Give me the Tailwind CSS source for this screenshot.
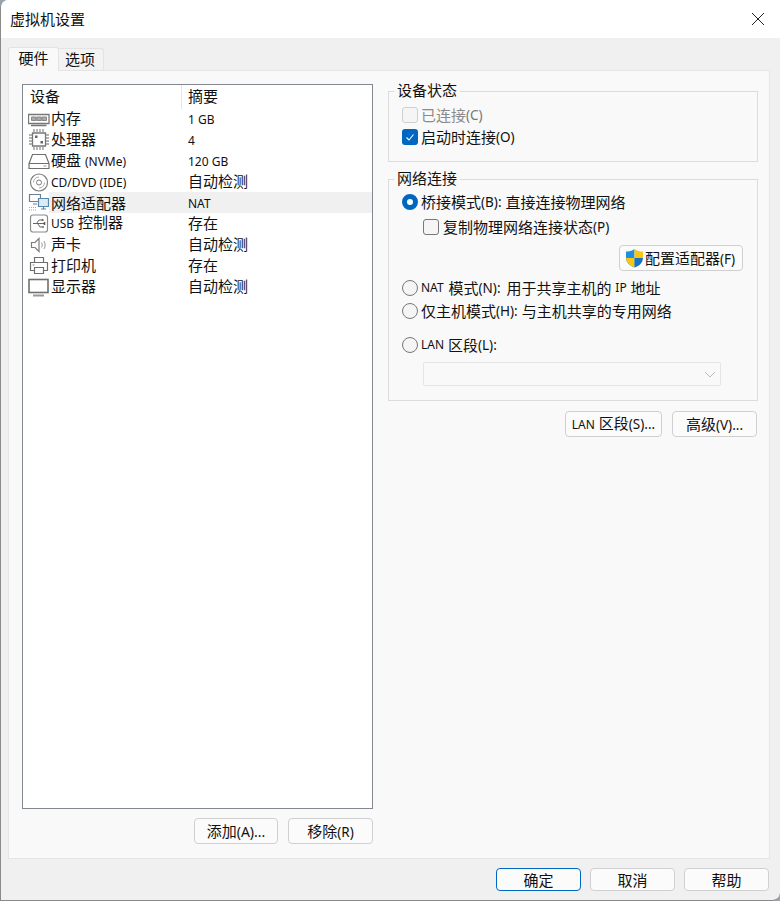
<!DOCTYPE html>
<html lang="zh-CN">
<head>
<meta charset="utf-8">
<title>虚拟机设置</title>
<script src="https://cdn.jsdelivr.net/npm/@tailwindcss/browser@4"></script>
</head>
<body class="w-[780px] h-[901px] overflow-hidden bg-[#9aa3ad] text-[15px] leading-[20px] text-[#111] font-['Noto_Sans','Noto_Sans_CJK_SC',sans-serif]">
<div class="w-[780px] h-[901px] flex flex-col overflow-hidden rounded-tl-lg rounded-br-lg border-b border-l border-[#8a8a8a] bg-[#f0f0f0]">
  <header class="h-[38px] shrink-0 bg-white flex items-center justify-between pl-[9px] pr-[15px]">
    <span>虚拟机设置</span>
    <svg class="w-[14px] h-[14px]" viewBox="0 0 14 14" fill="none" stroke="#222" stroke-width="1"><path d="M1 1l12 12M13 1L1 13"/></svg>
  </header>
  <div class="flex items-end h-[32px] pl-[7px] shrink-0">
    <div class="relative z-10 h-[24px] w-[51px] -mb-px bg-[#f9f9f9] border border-b-0 border-[#e3e3e3] rounded-t-[3px] text-center leading-[20px]">硬件</div>
    <div class="h-[22px] w-[45px] pr-[2px] border border-l-0 border-b-0 border-[#e3e3e3] bg-[#f3f3f3] rounded-tr-[3px] text-center leading-[20px]">选项</div>
  </div>
  <main class="ml-[7px] w-[762px] h-[789px] shrink-0 bg-[#f9f9f9] border border-[#e5e5e5] flex pl-[13px] pt-[13px]">
    <section class="w-[351px] shrink-0">
      <div class="h-[725px] bg-white border border-[#828790]">
        <div class="flex h-[24px] items-center">
          <div class="w-[159px] h-[24px] border-r border-[#e5e5e5] pl-[7px] leading-[23px]">设备</div>
          <div class="pl-[6px] leading-[23px] h-[24px]">摘要</div>
        </div>
        <ul class="-mt-px">
          <li class="flex h-[21px] items-center">
            <svg class="w-[22px] h-[16px] ml-[5px] mt-[2px] shrink-0" viewBox="0 0 22 16" fill="none" stroke="#777"><path d="M.5 2.500h20.500v9H.5zM3 13.500h15.500" stroke-width="1.300"/><path d="M3.500 5h4.500v3.500h-4.500zM8.800 5h4.500v3.500h-4.500zM14 5h4.500v3.500h-4.500z" fill="#aaa" stroke="#888"/></svg>
            <span class="w-[138px] pl-[1px] pb-[2px] shrink-0">内存</span><span class="text-[12px] pt-[2px]">1 GB</span>
          </li>
          <li class="flex h-[21px] items-center">
            <svg class="w-[22px] h-[21px] ml-[5px] shrink-0" viewBox="0 0 22 21" fill="none" stroke="#777"><path d="M4.500 4h13v13h-13z" stroke-width="1.300"/><path d="M6 0v3M9 0v3M12 0v3M15 0v3M6 18v3M9 18v3M12 18v3M15 18v3M1 6h3M1 9h3M1 12h3M1 15h3M18 6h3M18 9h3M18 12h3M18 15h3" stroke="#999" stroke-width="1.400"/><rect x="7" y="6.500" width="2.500" height="2.500" fill="#666" stroke="none"/><rect x="12.500" y="12" width="2.500" height="2.500" fill="#666" stroke="none"/></svg>
            <span class="w-[138px] pl-[1px] pb-[2px] shrink-0">处理器</span><span class="text-[12px] pt-[2px]">4</span>
          </li>
          <li class="flex h-[21px] items-center">
            <svg class="w-[22px] h-[17px] ml-[5px] mt-[2px] shrink-0" viewBox="0 0 22 17" fill="none" stroke="#6f6f6f" stroke-width="1.200"><path d="M4.500 1.500h13l3.500 9v5H1v-5zM1 10.500h20"/><path d="M15.500 13h3" stroke="#999"/></svg>
            <span class="w-[138px] pl-[1px] shrink-0">硬盘 <span class="text-[12px]">(NVMe)</span></span><span class="text-[12px] pt-[2px]">120 GB</span>
          </li>
          <li class="flex h-[21px] items-center">
            <svg class="w-[20px] h-[19px] ml-[6px] mr-[1px] mt-[2px] shrink-0" viewBox="0 0 20 19" fill="none" stroke="#7d7d7d"><circle cx="10" cy="9.500" r="8.500" stroke-width="1.200"/><circle cx="10" cy="9.500" r="2.500"/><path d="M4.500 9.500a5.500 5.500 0 0 1 5.500-5.500" stroke="#aaa"/><path d="M15.500 9.500a5.500 5.500 0 0 1-5.500 5.500" stroke="#aaa"/></svg>
            <span class="w-[138px] pl-[1px] pt-[2px] shrink-0 text-[12px]">CD/DVD (IDE)</span><span class="pb-[2px]">自动检测</span>
          </li>
          <li class="flex h-[21px] items-center">
            <svg class="w-[22px] h-[20px] ml-[5px] shrink-0" viewBox="0 0 22 20" fill="none" stroke="#5b88a8" stroke-width="1.200"><path d="M1.500 1.500h11v7h-11zM5 11h4" stroke="#6f7e8a"/><path d="M10.500 5.500h10v8h-10z" fill="#dbeaf5"/><path d="M15.500 13.500v2M13 16h5" stroke="#5b88a8"/><path d="M1 14.500h7M1 17h7" stroke="#aaa" stroke-dasharray="1 1"/></svg>
            <span class="flex-1 h-[21px] bg-[#f0f0f0] flex items-center ml-[-1px] pl-[1px]">
              <span class="w-[138px] pl-[1px] shrink-0">网络适配器</span><span class="text-[12px] pt-[2px]">NAT</span>
            </span>
          </li>
          <li class="flex h-[21px] items-center">
            <svg class="w-[20px] h-[19px] ml-[6px] mr-[1px] shrink-0" viewBox="0 0 20 19" fill="none" stroke="#8a8a8a"><rect x="1.500" y="1" width="17" height="17" rx="2.500" stroke-width="1.200"/><path d="M4 9.500h11.500M7.500 9.500l2.500-3.500h2.500M8.500 9.500l2.500 3.500h2" stroke="#666"/><path d="M15.500 8v3" stroke="#555" stroke-width="1.500"/><rect x="12.500" y="5" width="2" height="2" fill="#666" stroke="none"/><circle cx="14" cy="13" r="1" fill="#666" stroke="none"/></svg>
            <span class="w-[138px] pl-[1px] pb-[2px] shrink-0"><span class="text-[12px]">USB</span> 控制器</span><span class="pb-[2px]">存在</span>
          </li>
          <li class="flex h-[21px] items-center">
            <svg class="w-[20px] h-[18px] ml-[6px] mr-[1px] shrink-0" viewBox="0 0 20 18" fill="none" stroke="#7d7d7d"><path d="M2.500 6.500h3.500l4-4v13l-4-4h-3.500z" stroke-width="1.200"/><path d="M12.500 6.500c1 1.500 1 3.500 0 5M15 5c1.500 2.500 1.500 5.500 0 8" stroke="#999"/></svg>
            <span class="w-[138px] pl-[1px] pb-[2px] shrink-0">声卡</span><span class="pb-[2px]">自动检测</span>
          </li>
          <li class="flex h-[21px] items-center">
            <svg class="w-[20px] h-[19px] ml-[6px] mr-[1px] shrink-0" viewBox="0 0 20 19" fill="none" stroke="#6f6f6f" stroke-width="1.200"><path d="M5.500 6.500v-5h9v5M5 14.500H1.500v-8h17v8H15"/><path d="M5.500 11.500h9v6h-9z"/><path d="M3.500 9h2" stroke="#999"/></svg>
            <span class="w-[138px] pl-[1px] pb-[2px] shrink-0">打印机</span><span class="pb-[2px]">存在</span>
          </li>
          <li class="flex h-[21px] items-center">
            <svg class="w-[21px] h-[19px] ml-[5px] mr-[1px] mt-[2px] shrink-0" viewBox="0 0 21 19" fill="none" stroke="#6f6f6f"><rect x="1" y="1.500" width="19" height="13" stroke-width="1.600"/><path d="M5 17.500h11" stroke-width="2" stroke="#999"/></svg>
            <span class="w-[138px] pl-[1px] pb-[2px] shrink-0">显示器</span><span class="pb-[2px]">自动检测</span>
          </li>
        </ul>
      </div>
      <div class="flex justify-end gap-[10px] mt-[9px]">
        <button class="w-[84px] h-[26px] bg-[#fbfbfb] border border-[#d0d0d0] rounded-[4px]">添加<span class="text-[14px]">(A)...</span></button>
        <button class="w-[85px] h-[26px] bg-[#fbfbfb] border border-[#d0d0d0] rounded-[4px]">移除<span class="text-[13.500px]">(R)</span></button>
      </div>
    </section>
    <section class="w-[370px] ml-[15px] shrink-0">
      <fieldset class="mt-[7px] h-[71px] border border-[#dcdcdc] relative">
        <span class="absolute left-[5px] top-[-12px] px-[3px] bg-[#f9f9f9]">设备状态</span>
        <div class="flex items-center h-[24px] mt-[11px] pl-[13px] text-[#8a8a8a]">
          <span class="w-[16px] h-[16px] rounded-[3px] border border-[#cfcfcf] bg-[#f5f5f5] mr-[3px]"></span>已连接<span class="text-[13.500px] text-[#777]">(C)</span>
        </div>
        <div class="flex items-center h-[20px] pl-[13px]">
          <span class="w-[16px] h-[16px] rounded-[3px] bg-[#0067c0] mr-[3px] flex items-center justify-center">
            <svg class="w-[12px] h-[12px]" viewBox="0 0 12 12" fill="none" stroke="#fff" stroke-width="1.100"><path d="M2.500 6.500l2.500 2.500 4.500-5.500"/></svg>
          </span>启动时连接<span class="text-[13.500px]">(O)</span>
        </div>
      </fieldset>
      <fieldset class="mt-[17px] h-[222px] border border-[#dcdcdc] relative">
        <span class="absolute left-[5px] top-[-12px] px-[3px] bg-[#f9f9f9]">网络连接</span>
        <div class="flex items-center h-[24px] mt-[10px] pl-[13px]">
          <span class="w-[16px] h-[16px] rounded-full border-[5px] border-[#0067c0] bg-white mr-[3px]"></span>桥接模式<span class="text-[13.500px]">(B):</span>&nbsp;直接连接物理网络
        </div>
        <div class="flex items-center h-[24px] mt-[1px] pl-[34px]">
          <span class="w-[16px] h-[16px] rounded-[3px] border border-[#777] bg-[#f5f5f5] mr-[4px]"></span>复制物理网络连接状态<span class="text-[13.500px]">(P)</span>
        </div>
        <div class="flex justify-end pr-[14px] mt-[6px]">
          <button class="w-[124px] h-[26px] bg-[#fbfbfb] border border-[#d0d0d0] rounded-[4px] flex items-center pl-[5px]">
            <svg class="w-[19px] h-[20px] shrink-0" viewBox="0 0 19 20"><path d="M9.500 1C7 3 4 3.500 1 3.500v6c0 5 3.500 8 8.500 10z" fill="#1b8fe0"/><path d="M9.500 1c2.500 2 5.500 2.500 8.500 2.500v6.500h-8.500z" fill="#f9c513"/><path d="M1 10h8.500v9.500C5 18 1.500 15 1 10z" fill="#f9c513"/><path d="M9.500 10H18c-.5 5-3.500 8-8.500 9.500z" fill="#1673c4"/></svg>
            <span class="ml-[1px] whitespace-nowrap">配置适配器<span class="text-[13.500px]">(F)</span></span>
          </button>
        </div>
        <div class="flex items-center h-[24px] mt-[5px] pl-[13px]">
          <span class="w-[16px] h-[16px] rounded-full border border-[#777] bg-[#f5f5f5] mr-[3px]"></span><span class="text-[12px] mr-[1px]">NAT</span>&nbsp;模式<span class="text-[13.500px] mr-[2px]">(N):</span>&nbsp;用于共享主机的&nbsp;<span class="text-[12px]">IP</span>&nbsp;地址
        </div>
        <div class="flex items-center h-[22px] pl-[13px]">
          <span class="w-[16px] h-[16px] rounded-full border border-[#777] bg-[#f5f5f5] mr-[3px]"></span>仅主机模式<span class="text-[13.500px]">(H):</span>&nbsp;与主机共享的专用网络
        </div>
        <div class="flex items-center h-[24px] mt-[11px] pl-[13px]">
          <span class="w-[16px] h-[16px] rounded-full border border-[#777] bg-[#f5f5f5] mr-[3px]"></span><span class="text-[12px]">LAN</span>&nbsp;区段<span class="text-[13.500px]">(L):</span>
        </div>
        <div class="ml-[34px] mt-[5px] w-[298px] h-[24px] border border-[#e5e5e5] bg-[#f9f9f9] rounded-[2px] flex items-center justify-end pr-[3px]">
          <svg class="w-[14px] h-[14px]" viewBox="0 0 14 14" fill="none" stroke="#bbb"><path d="M2 5l5 5 5-5"/></svg>
        </div>
      </fieldset>
      <div class="flex justify-end gap-[10px] mt-[10px] pr-[1px]">
        <button class="w-[97px] h-[26px] bg-[#fbfbfb] border border-[#d0d0d0] rounded-[4px] whitespace-nowrap"><span class="text-[12px]">LAN</span> 区段<span class="text-[13.500px]">(S)...</span></button>
        <button class="w-[85px] h-[26px] bg-[#fbfbfb] border border-[#d0d0d0] rounded-[4px]">高级<span class="text-[13.500px]">(V)...</span></button>
      </div>
    </section>
  </main>
  <footer class="flex justify-end gap-[9px] pr-[11px] pt-[9px]">
    <button class="w-[85px] h-[23px] leading-[20px] bg-[#fbfbfb] border border-[#0067c0] rounded-[4px]">确定</button>
    <button class="w-[85px] h-[23px] leading-[20px] bg-[#fbfbfb] border border-[#d0d0d0] rounded-[4px]">取消</button>
    <button class="w-[85px] h-[23px] leading-[20px] bg-[#fbfbfb] border border-[#d0d0d0] rounded-[4px]">帮助</button>
  </footer>
</div>
</body>
</html>
